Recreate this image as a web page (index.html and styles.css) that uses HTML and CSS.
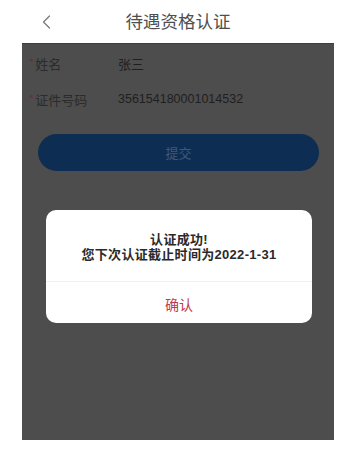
FILE: index.html
```html
<!DOCTYPE html>
<html lang="zh-CN">
<head>
<meta charset="utf-8">
<title>待遇资格认证</title>
<link rel="stylesheet" href="styles.css">
</head>
<body>
<div class="page">
  <header class="topbar">
    <span class="back">
      <svg width="9" height="14" viewBox="0 0 9 14"><polyline points="7.5,1 1.5,7 7.5,13" fill="none" stroke="#7a7a7a" stroke-width="1.3" stroke-linecap="round" stroke-linejoin="round"/></svg>
    </span>
    <h1 class="title">待遇资格认证</h1>
  </header>
  <main class="panel">
    <div class="row">
      <span class="label"><span class="star">*</span>姓名</span>
      <span class="value">张三</span>
    </div>
    <div class="row">
      <span class="label"><span class="star">*</span>证件号码</span>
      <span class="value num">356154180001014532</span>
    </div>
    <div class="submit">提交</div>

    <div class="dialog">
      <div class="msg">
        <p>认证成功!</p>
        <p>您下次认证截止时间为2022-1-31</p>
      </div>
      <div class="confirm">确认</div>
    </div>
  </main>
</div>
</body>
</html>
```
FILE: styles.css
```css
* { box-sizing: border-box; }
html, body {
  margin: 0;
  padding: 0;
  background: #ffffff;
}
body {
  font-family: "Liberation Sans", "Noto Sans CJK SC", sans-serif;
  width: 354px;
  height: 450px;
  overflow: hidden;
}
.page {
  width: 354px;
}
.topbar {
  height: 43px;
  position: relative;
  display: flex;
  align-items: center;
  justify-content: center;
}
.back {
  position: absolute;
  left: 42px;
  top: 15px;
  display: flex;
}
.title {
  margin: 0;
  font-family: "Noto Sans CJK SC", sans-serif;
  font-weight: 400;
  font-size: 17.5px;
  color: #4e4e4e;
  line-height: 20px;
  padding-left: 2px;
  margin-top: -2px;
}
.panel {
  position: relative;
  margin-left: 22px;
  width: 312px;
  height: 397px;
  background: #4d4d4d;
  padding-top: 1px;
  border-top: 1px solid #3e3e3e;
}
.row {
  height: 36px;
  display: flex;
  align-items: center;
}
.label {
  width: 96px;
  padding-left: 7px;
  font-family: "Noto Sans CJK SC", sans-serif;
  font-size: 13px;
  color: #2b2b2b;
  display: flex;
  align-items: center;
}
.star {
  color: #7a2630;
  font-size: 11px;
  margin-right: 1px;
  position: relative;
  top: -1px;
}
.value {
  font-family: "Noto Sans CJK SC", sans-serif;
  font-size: 13px;
  color: #1f1f1f;
}
.value.num {
  font-family: "Liberation Sans", sans-serif;
  font-size: 12.5px;
}
.submit {
  margin: 17px 15px 0 16px;
  height: 37px;
  border-radius: 19px;
  background: #0e2d52;
  color: #40577a;
  font-family: "Noto Sans CJK SC", sans-serif;
  font-size: 13px;
  display: flex;
  align-items: center;
  justify-content: center;
}
.dialog {
  position: absolute;
  left: 24px;
  top: 166px;
  width: 266px;
  height: 113px;
  background: #ffffff;
  border-radius: 10px;
  display: flex;
  flex-direction: column;
}
.msg {
  padding-top: 22px;
  height: 72px;
  border-bottom: 1px solid #f0f0f0;
  text-align: center;
}
.msg p {
  margin: 0;
  font-family: "Liberation Sans", "Noto Sans CJK SC", sans-serif;
  font-weight: 700;
  font-size: 13px;
  letter-spacing: 0.3px;
  line-height: 15px;
  color: #2a2a2a;
}
.confirm {
  flex: 1;
  display: flex;
  align-items: center;
  justify-content: center;
  font-family: "Noto Sans CJK SC", sans-serif;
  font-size: 14px;
  color: #c13a4c;
  padding-top: 2px;
}
```
